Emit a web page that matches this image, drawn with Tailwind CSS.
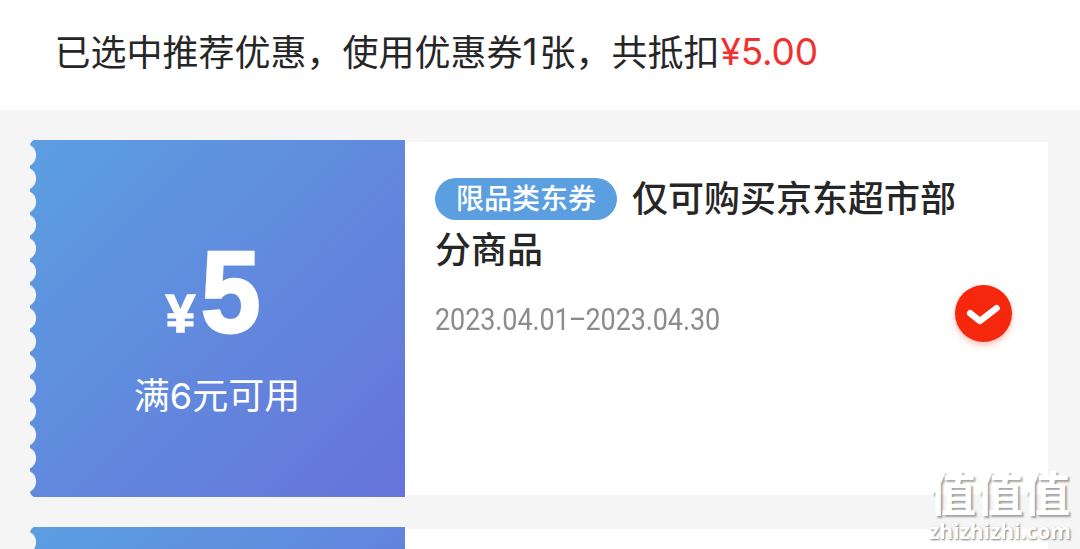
<!DOCTYPE html>
<html lang="zh-CN">

<head>
  <meta charset="UTF-8" />
  <meta name="viewport" content="width=device-width, initial-scale=1.0" />
  <title>优惠券</title>
  <script src="https://cdn.jsdelivr.net/npm/@tailwindcss/browser@4"></script>
</head>

<body class="relative h-[549px] overflow-hidden bg-[#f5f5f5] font-['Noto_Sans_CJK_SC',sans-serif] text-[#262626]">

  <!-- Summary -->
  <header class="flex h-[110px] items-center bg-white pb-[11px] pl-[54.5px] text-[36px] leading-none whitespace-nowrap">
    <span>已选中推荐优惠，使用优惠券</span>
    <span class="w-[17px] pt-[4px] font-['Inter',sans-serif] text-[37px] tracking-[-1px]">1</span>
    <span>张，共抵扣</span>
    <span class="pt-[4px] pl-px font-['Inter',sans-serif] text-[37px] tracking-[-0.2px] text-[#f2302f]">¥5.00</span>
  </header>

  <main class="flex h-[439px] flex-col gap-[30px] overflow-hidden pt-[30px] pr-8 pl-[30px]">
    <!-- Selected coupon -->
    <section class="flex h-[357px] shrink-0">
      <div class="relative flex w-[375px] shrink-0 flex-col items-center bg-linear-[135deg,#5b9fe1,#6774da] text-white">
        <svg class="absolute top-0 left-0 h-full w-[8px]" viewBox="0 0 8 357">
          <defs>
            <pattern id="teeth" width="8" height="23.3" y="3.6" patternUnits="userSpaceOnUse">
              <circle cx="-5.5" cy="11.65" r="11.6" fill="#f5f5f5" />
            </pattern>
          </defs>
          <rect width="8" height="357" fill="url(#teeth)" />
          <path d="M0 0H4Q1 1 0 5ZM0 357H4Q1 356 0 352Z" fill="#f5f5f5" />
        </svg>
        <div class="mt-[98px] mr-[4px] flex h-[115px] items-baseline font-['Liberation_Sans',sans-serif] leading-none font-bold">
          <span class="mr-[6px] text-[53px] [-webkit-text-stroke:1.5px_white]">¥</span>
          <span class="origin-left scale-x-[0.93] text-[115px] leading-[108px] [-webkit-text-stroke:3px_white]">5</span>
        </div>
        <p class="mt-[22px] mr-px flex text-[36px] leading-[36px]">
          <span>满</span><span class="pt-[3px] font-['Inter',sans-serif] text-[36px]">6</span><span>元可用</span>
        </p>
      </div>

      <div class="mt-[2px] flex h-[353px] grow bg-white pl-[30px]">
        <div class="w-[530px] shrink-0 pt-[31px]">
          <h2 class="text-[36px] font-medium">
            <span class="flex h-[51px] items-center">
              <span class="mr-[15px] flex h-[42px] w-[182px] items-center justify-center rounded-full bg-[#5b9fe1] pb-[3px] text-[28px] leading-none text-white">限品类东券</span>
              <span class="pb-[5px] leading-none">仅可购买京东超市部</span>
            </span>
            <span class="flex h-[51px] items-center pb-[5px] leading-none">分商品</span>
          </h2>
          <p class="mt-[27px] w-fit origin-left scale-x-[0.87] font-['Roboto',sans-serif] text-[31px] leading-[36px] tracking-[-0.1px] whitespace-nowrap text-[#8c8c8c]">2023.04.01<span class="mx-[-1px]">–</span>2023.04.30</p>
        </div>
        <svg class="mt-[133px] -ml-[20px] h-[80px] w-[80px] shrink-0" viewBox="0 0 80 80">
          <circle cx="38.5" cy="38.5" r="28.5" fill="#f5270d" class="drop-shadow-[0_3px_3px_rgba(245,39,13,0.3)]" />
          <path d="M25.2 38.2L34.9 46L51.5 33.2" fill="none" stroke="#fff" stroke-width="6.5" stroke-linecap="round" stroke-linejoin="round" />
        </svg>
      </div>
    </section>

    <!-- Next coupon -->
    <section class="flex h-[22px] shrink-0">
      <div class="relative w-[375px] shrink-0 overflow-hidden bg-linear-[135deg,#5b9fe1,#6284de]">
        <svg class="absolute top-0 left-0 h-[22px] w-[8px]" viewBox="0 0 8 22">
          <rect width="8" height="22" fill="url(#teeth)" />
          <path d="M0 0H4Q1 1 0 5Z" fill="#f5f5f5" />
        </svg>
      </div>
      <div class="mt-[2px] grow bg-white"></div>
    </section>
  </main>

  <!-- Watermark -->
  <div class="absolute top-[464px] left-[929px] w-[143px] text-white">
    <p class="h-[53px] text-[47px] leading-[53px] font-bold whitespace-nowrap text-shadow-[2px_2px_2px_rgb(0_0_0/0.35)]">值值值</p>
    <p class="font-['Open_Sans',sans-serif] text-[21px] leading-[28px] font-bold whitespace-nowrap text-shadow-[1px_1px_2px_rgb(0_0_0/0.5)]">zhizhizhi.com</p>
  </div>

</body>

</html>
